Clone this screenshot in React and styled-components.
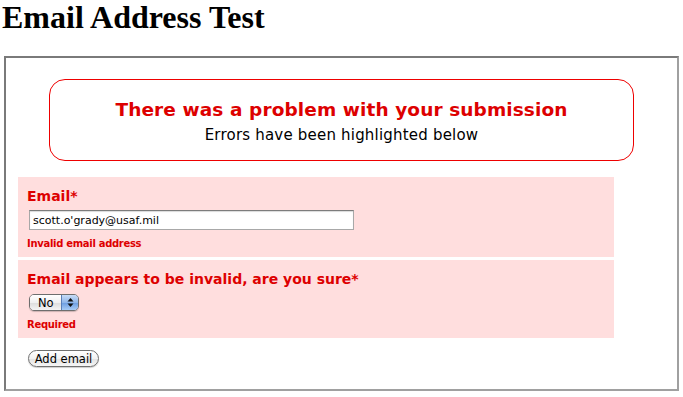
import React from "react";
import styled, { createGlobalStyle } from "styled-components";

const Global = createGlobalStyle`
  html, body { margin: 0; padding: 0; background: #fff; }
  body { font-family: "DejaVu Sans", Verdana, sans-serif; }
`;

const Page = styled.div`
  display: flex;
  flex-direction: column;
  width: 683px;
`;

const Title = styled.h1`
  margin: 0 0 0 2px;
  font-family: "Liberation Serif", "Times New Roman", serif;
  font-size: 32px;
  font-weight: bold;
  line-height: 34px;
  color: #000;
`;

const Fieldset = styled.div`
  margin: 22px 4px 0 4px;
  border: 2px solid;
  border-color: #7a7a7a #a0a0a0 #a0a0a0 #7a7a7a;
  display: flex;
  flex-direction: column;
  align-items: flex-start;
  padding: 21px 0 22px 0;
`;

const ErrorBox = styled.div`
  align-self: stretch;
  margin: 0 43px;
  height: 82px;
  border: 1px solid #ee0000;
  border-radius: 16px;
  display: flex;
  flex-direction: column;
  align-items: center;
  padding-top: 18px;
  box-sizing: border-box;
`;

const ErrorTitle = styled.div`
  color: #dd0000;
  font-weight: bold;
  font-size: 18.5px;
  letter-spacing: 0.1px;
  line-height: 24px;
`;

const ErrorSub = styled.div`
  color: #000;
  font-size: 15px;
  letter-spacing: 0.2px;
  line-height: 20px;
  margin-top: 3px;
`;

const Section = styled.div`
  width: 596px;
  margin: ${(p) => p.$mt}px 0 0 12px;
  background: #ffdede;
  padding: 9px 9px 6px 9px;
  box-sizing: border-box;
  display: flex;
  flex-direction: column;
  align-items: flex-start;
`;

const Label = styled.div`
  color: #dd0000;
  font-weight: bold;
  font-size: 14px;
  line-height: 18px;
  margin-top: 1px;
  margin-bottom: ${(p) => p.$gap}px;
`;

const TextInput = styled.input`
  width: 325px;
  height: 20px;
  box-sizing: border-box;
  margin: 0 0 0 2px;
  border: 1px solid #a8a8a8;
  border-top-color: #7c7c7c;
  box-shadow: inset 0 1px 1px rgba(0,0,0,0.15);
  font-family: "DejaVu Sans", Verdana, sans-serif;
  font-size: 11px;
  padding: 0 3px;
  color: #000;
  background: #fff;
  outline: none;
`;

const Hint = styled.div`
  color: #dd0000;
  font-weight: bold;
  font-size: 10px;
  letter-spacing: -0.3px;
  line-height: 14px;
  margin-top: 7px;
`;

const Select = styled.div`
  margin-left: 2px;
  width: 50px;
  height: 17px;
  box-sizing: border-box;
  border: 1px solid #6e6e6e;
  border-radius: 5px;
  display: flex;
  overflow: hidden;
  font-size: 11.5px;
  box-shadow: 0 1px 1px rgba(0,0,0,0.2);
`;

const SelectText = styled.div`
  flex: 1;
  display: flex;
  align-items: center;
  padding-left: 8px;
  background: linear-gradient(#ffffff, #f0f0f0 50%, #dcdcdc 51%, #f4f4f4);
  color: #000;
`;

const SelectArrow = styled.div`
  width: 16px;
  border-left: 1px solid #5a7fb8;
  background: linear-gradient(#c8dcf6, #8fb6ea 50%, #6a9be0 51%, #a8ccf6);
  display: flex;
  align-items: center;
  justify-content: center;
`;

const Button = styled.button`
  margin: 12px 0 0 22px;
  height: 17px;
  width: 71px;
  padding: 0;
  border: 1px solid #707070;
  border-radius: 9px;
  background: linear-gradient(#ffffff, #f2f2f2 50%, #e2e2e2 51%, #f6f6f6);
  font-family: "DejaVu Sans", Verdana, sans-serif;
  font-size: 11.5px;
  color: #000;
  box-shadow: 0 1px 1px rgba(0,0,0,0.2);
`;

export default function App() {
  return (
    <>
      <Global />
      <Page>
        <Title>Email Address Test</Title>
        <Fieldset>
          <ErrorBox>
            <ErrorTitle>There was a problem with your submission</ErrorTitle>
            <ErrorSub>Errors have been highlighted below</ErrorSub>
          </ErrorBox>
          <Section $mt={16}>
            <Label $gap={5}>Email*</Label>
            <TextInput defaultValue="scott.o'grady@usaf.mil" />
            <Hint>Invalid email address</Hint>
          </Section>
          <Section $mt={3}>
            <Label $gap={6}>Email appears to be invalid, are you sure*</Label>
            <Select>
              <SelectText>No</SelectText>
              <SelectArrow>
                <svg width="7" height="11" viewBox="0 0 7 11">
                  <path d="M3.5 1 L6.5 4.5 H0.5 Z" fill="#111" />
                  <path d="M3.5 10 L6.5 6.5 H0.5 Z" fill="#111" />
                </svg>
              </SelectArrow>
            </Select>
            <Hint>Required</Hint>
          </Section>
          <Button>Add email</Button>
        </Fieldset>
      </Page>
    </>
  );
}
